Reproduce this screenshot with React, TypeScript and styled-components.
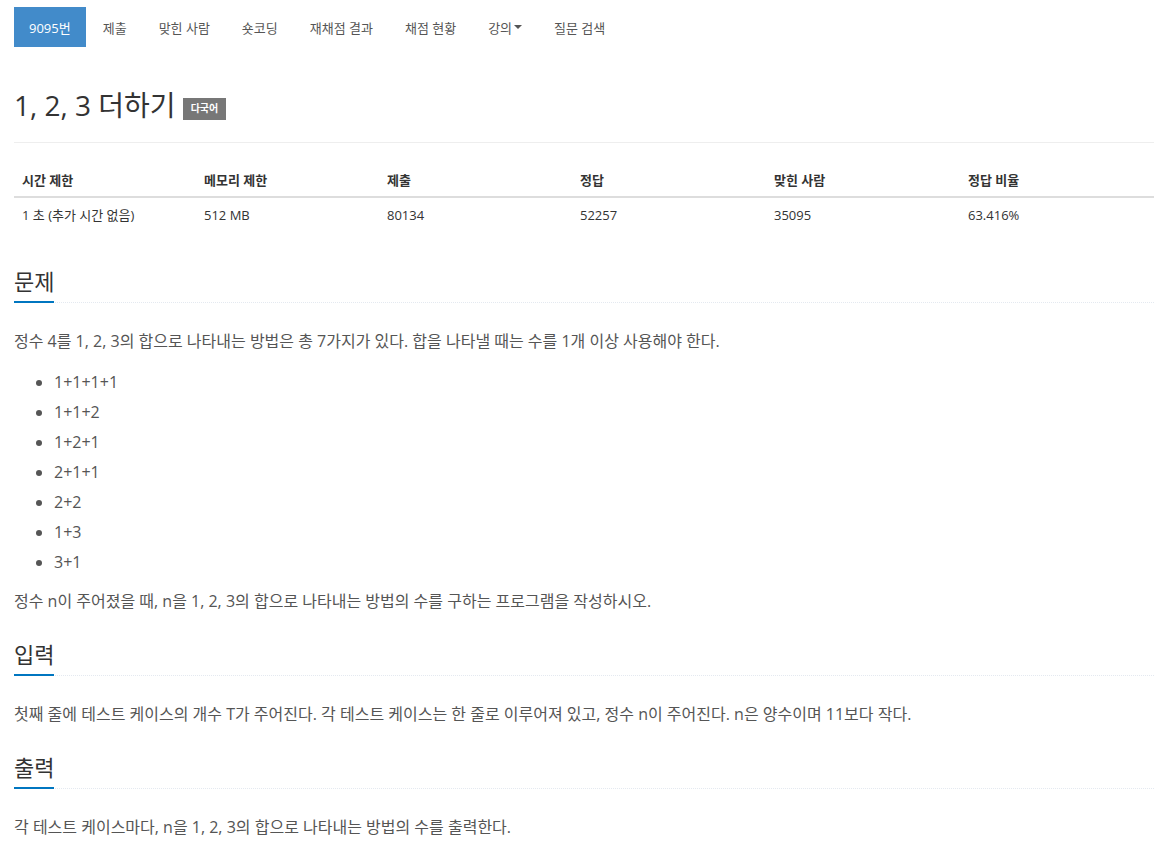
import React from 'react'
import styled, { createGlobalStyle } from 'styled-components'

const GlobalStyle = createGlobalStyle`
  body {
    margin: 0;
    background: #fff;
    color: #333;
    font-family: 'Open Sans', 'Noto Sans CJK KR', sans-serif;
  }
`

const Page = styled.div`
  width: 1140px;
  padding: 7px 0 20px 14px;
`

const Nav = styled.ul`
  display: flex;
  list-style: none;
  margin: 0;
  padding: 0;
`

const NavItem = styled.li<{ active?: boolean }>`
  height: 40px;
  display: flex;
  align-items: center;
  padding: 0 15px;
  margin-right: 2px;
  font-size: 13px;
  color: ${({ active }) => (active ? '#fff' : '#555')};
  background: ${({ active }) => (active ? '#428bca' : 'transparent')};
`

const Caret = styled.span`
  display: inline-block;
  margin-left: 2px;
  border-top: 4px solid #555;
  border-left: 4px solid transparent;
  border-right: 4px solid transparent;
`

const TitleRow = styled.div`
  display: flex;
  align-items: center;
  gap: 7px;
  margin-top: 38px;
  padding-bottom: 17px;
  border-bottom: 1px solid #eee;
`

const Title = styled.h1`
  margin: 0;
  font-size: 28px;
  font-weight: 400;
  line-height: 40px;
  color: #333;
`

const Label = styled.span`
  margin-top: 8px;
  background: #777;
  color: #fff;
  font-size: 10px;
  font-weight: 700;
  padding: 4px 8px 5px;
  line-height: 13px;
`

const InfoTable = styled.table`
  width: 100%;
  margin: 19px 0 34px;
  border-collapse: collapse;
  table-layout: fixed;
  font-size: 13px;
`

const Th = styled.th<{ w: number }>`
  box-sizing: border-box;
  width: ${({ w }) => w}px;
  text-align: left;
  font-weight: 700;
  padding: 8px 8px 7px;
  height: 17px;
  border-bottom: 2px solid #ddd;
`

const Td = styled.td`
  padding: 7px 8px 8px;
  color: #333;
`

const Section = styled.section`
  margin-top: 24px;
`

const Headline = styled.div`
  border-bottom: 1px dotted #e4e9f0;
`

const H2 = styled.h2`
  display: inline-block;
  margin: 0 0 -1px;
  padding-bottom: 5px;
  font-size: 22px;
  font-weight: 400;
  line-height: 30px;
  color: #333;
  border-bottom: 2px solid #0076c0;
`

const Text = styled.p`
  margin: 25px 0 0;
  font-size: 16px;
  line-height: 27px;
  color: #555;
`

const List = styled.ul`
  margin: 12px 0 0;
  padding-left: 40px;
  font-size: 16px;
  line-height: 30px;
  color: #555;
`

const Tight = styled(Text)`
  margin-top: 11px;
`

const cols = [
  { name: '시간 제한', value: '1 초 (추가 시간 없음)', w: 182 },
  { name: '메모리 제한', value: '512 MB', w: 183 },
  { name: '제출', value: '80134', w: 193 },
  { name: '정답', value: '52257', w: 194 },
  { name: '맞힌 사람', value: '35095', w: 194 },
  { name: '정답 비율', value: '63.416%', w: 194 },
]

const navItems = ['제출', '맞힌 사람', '숏코딩', '재채점 결과', '채점 현황']

export default function App() {
  return (
    <Page>
      <GlobalStyle />
      <Nav>
        <NavItem active>9095번</NavItem>
        {navItems.map((n) => (
          <NavItem key={n}>{n}</NavItem>
        ))}
        <NavItem>
          강의<Caret />
        </NavItem>
        <NavItem>질문 검색</NavItem>
      </Nav>

      <TitleRow>
        <Title>1, 2, 3 더하기</Title>
        <Label>다국어</Label>
      </TitleRow>

      <InfoTable>
        <thead>
          <tr>
            {cols.map((c) => (
              <Th key={c.name} w={c.w}>
                {c.name}
              </Th>
            ))}
          </tr>
        </thead>
        <tbody>
          <tr>
            {cols.map((c) => (
              <Td key={c.name}>{c.value}</Td>
            ))}
          </tr>
        </tbody>
      </InfoTable>

      <Section>
        <Headline>
          <H2>문제</H2>
        </Headline>
        <Text>정수 4를 1, 2, 3의 합으로 나타내는 방법은 총 7가지가 있다. 합을 나타낼 때는 수를 1개 이상 사용해야 한다.</Text>
        <List>
          <li>1+1+1+1</li>
          <li>1+1+2</li>
          <li>1+2+1</li>
          <li>2+1+1</li>
          <li>2+2</li>
          <li>1+3</li>
          <li>3+1</li>
        </List>
        <Tight>정수 n이 주어졌을 때, n을 1, 2, 3의 합으로 나타내는 방법의 수를 구하는 프로그램을 작성하시오.</Tight>
      </Section>

      <Section>
        <Headline>
          <H2>입력</H2>
        </Headline>
        <Text>첫째 줄에 테스트 케이스의 개수 T가 주어진다. 각 테스트 케이스는 한 줄로 이루어져 있고, 정수 n이 주어진다. n은 양수이며 11보다 작다.</Text>
      </Section>

      <Section>
        <Headline>
          <H2>출력</H2>
        </Headline>
        <Text>각 테스트 케이스마다, n을 1, 2, 3의 합으로 나타내는 방법의 수를 출력한다.</Text>
      </Section>
    </Page>
  )
}
